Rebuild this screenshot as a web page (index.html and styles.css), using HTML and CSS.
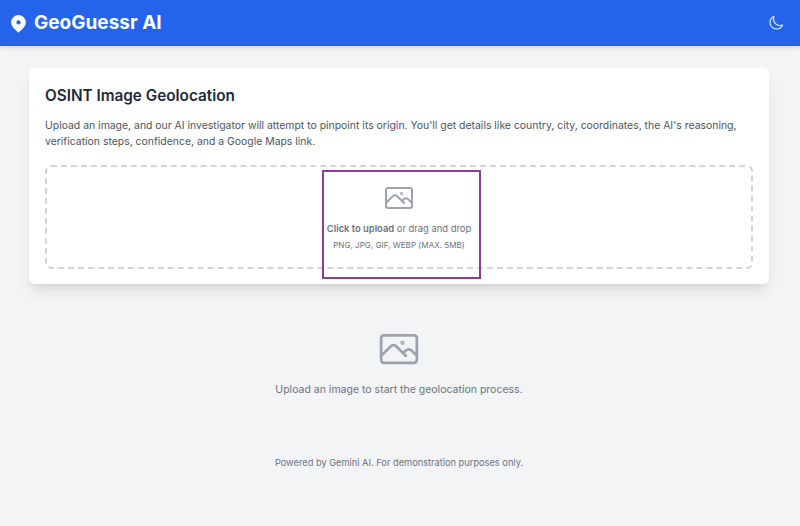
FILE: index.html
```html
<!DOCTYPE html>
<html lang="en">
<head>
<meta charset="utf-8">
<title>GeoGuessr AI</title>
<link rel="stylesheet" href="styles.css">
</head>
<body>
<header class="topbar">
  <div class="brand">
    <svg class="pin" viewBox="0 0 20 20" aria-hidden="true"><path fill-rule="evenodd" clip-rule="evenodd" d="M5.05 4.05a7 7 0 1 1 9.9 9.9L10 18.9l-4.95-4.95a7 7 0 0 1 0-9.9zM10 11a2 2 0 1 0 0-4 2 2 0 0 0 0 4z"/></svg>
    <h1 class="brand-name">GeoGuessr AI</h1>
  </div>
  <svg class="moon" viewBox="0 0 24 24" aria-hidden="true"><path d="M21.752 15.002A9.718 9.718 0 0 1 18 15.75c-5.385 0-9.75-4.365-9.75-9.75 0-1.33.266-2.597.748-3.752A9.753 9.753 0 0 0 3 11.25C3 16.635 7.365 21 12.75 21a9.753 9.753 0 0 0 9.002-5.998z"/></svg>
</header>
<main class="page">
  <section class="card">
    <h2 class="card-title">OSINT Image Geolocation</h2>
    <p class="card-text">Upload an image, and our AI investigator will attempt to pinpoint its origin. You'll get details like country, city, coordinates, the AI's reasoning, verification steps, confidence, and a Google Maps link.</p>
    <div class="dropzone">
      <svg class="image-icon small" viewBox="0 0 24 24" aria-hidden="true"><path d="M2.25 15.75l5.159-5.159a2.25 2.25 0 0 1 3.182 0l5.159 5.159m-1.5-1.5l1.409-1.409a2.25 2.25 0 0 1 3.182 0l2.909 2.909M3.75 19.5h16.5a1.5 1.5 0 0 0 1.5-1.5V6a1.5 1.5 0 0 0-1.5-1.5H3.75A1.5 1.5 0 0 0 2.25 6v12a1.5 1.5 0 0 0 1.5 1.5zM14.25 8.625a.375.375 0 1 1-.75 0 .375.375 0 0 1 .75 0z"/></svg>
      <p class="drop-main"><strong>Click to upload</strong> or drag and drop</p>
      <p class="drop-hint">PNG, JPG, GIF, WEBP (MAX. 5MB)</p>
      <div class="highlight"></div>
    </div>
  </section>
  <section class="empty">
    <svg class="image-icon large" viewBox="0 0 24 24" aria-hidden="true"><path d="M2.25 15.75l5.159-5.159a2.25 2.25 0 0 1 3.182 0l5.159 5.159m-1.5-1.5l1.409-1.409a2.25 2.25 0 0 1 3.182 0l2.909 2.909M3.75 19.5h16.5a1.5 1.5 0 0 0 1.5-1.5V6a1.5 1.5 0 0 0-1.5-1.5H3.75A1.5 1.5 0 0 0 2.25 6v12a1.5 1.5 0 0 0 1.5 1.5zM14.25 8.625a.375.375 0 1 1-.75 0 .375.375 0 0 1 .75 0z"/></svg>
    <p class="empty-text">Upload an image to start the geolocation process.</p>
  </section>
  <footer class="footer">Powered by Gemini AI. For demonstration purposes only.</footer>
</main>
</body>
</html>
```
FILE: styles.css
```css
* { box-sizing: border-box; }
html, body { margin: 0; height: 100%; }
body {
  background: #f3f4f6;
  font-family: Inter, "Liberation Sans", sans-serif;
  color: #1f2937;
  overflow: hidden;
}
p, h1, h2 { margin: 0; }
.topbar {
  height: 46px;
  background: #2563eb;
  display: flex;
  align-items: center;
  justify-content: space-between;
  padding: 0 16px 0 8px;
  box-shadow: 0 2px 4px rgba(0, 0, 0, .12);
}
.brand { display: flex; align-items: center; gap: 5px; }
.pin { width: 21px; height: 21px; fill: #fff; }
.brand-name { font-size: 19px; font-weight: 700; line-height: 24px; color: #fff; }
.moon { width: 16px; height: 16px; fill: none; stroke: #dbeafe; stroke-width: 1.8; stroke-linecap: round; stroke-linejoin: round; }
.page { padding: 22px 31px 0 29px; }
.card {
  background: #fff;
  border-radius: 6px;
  padding: 16px;
  height: 216px;
  box-shadow: 0 10px 15px -3px rgba(0, 0, 0, .1), 0 4px 6px -4px rgba(0, 0, 0, .1);
}
.card-title { font-size: 15.3px; font-weight: 600; line-height: 24px; color: #1f2937; }
.card-text { margin-top: 10px; font-size: 10.43px; line-height: 16px; color: #4b5563; }
.dropzone {
  position: relative;
  margin-top: 15px;
  height: 104px;
  border: 2px dashed #d1d5db;
  border-radius: 6px;
  display: flex;
  flex-direction: column;
  align-items: center;
  padding-top: 15px;
}
.highlight {
  position: absolute;
  left: 275px;
  top: 3px;
  width: 159px;
  height: 109px;
  border: 2px solid #8b3f8f;
}
.image-icon { fill: none; stroke: #9ca3af; stroke-width: 1.5; stroke-linecap: round; stroke-linejoin: round; }
.image-icon.small { width: 32px; height: 32px; }
.image-icon.large { width: 44px; height: 44px; stroke-width: 1.5; }
.drop-main { margin-top: 8px; font-size: 9.4px; line-height: 14px; color: #6b7280; }
.drop-main strong { font-weight: 600; }
.drop-hint { margin-top: 3px; font-size: 8.1px; line-height: 12px; color: #6b7280; }
.empty { margin-top: 43px; display: flex; flex-direction: column; align-items: center; }
.empty-text { margin-top: 11px; font-size: 10.5px; line-height: 16px; color: #6b7280; }
.footer { margin-top: 58px; text-align: center; font-size: 9.25px; line-height: 14px; color: #6b7280; }
```
